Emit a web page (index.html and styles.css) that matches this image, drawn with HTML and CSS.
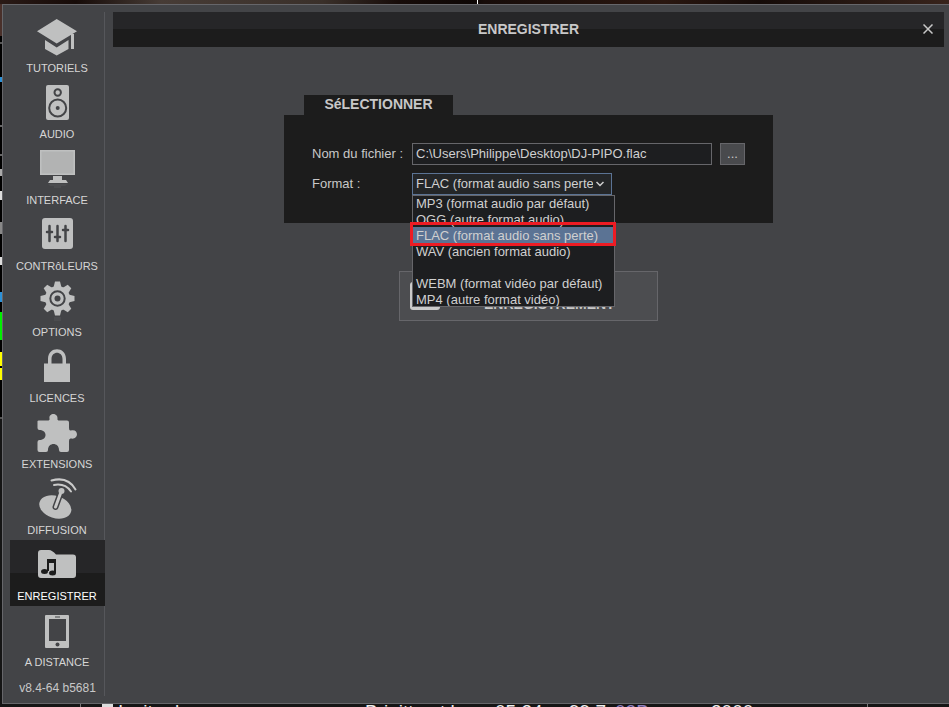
FILE: index.html
```html
<!DOCTYPE html>
<html lang="fr">
<head>
<meta charset="utf-8">
<title>Enregistrer</title>
<link rel="stylesheet" href="styles.css">
</head>
<body>
<div class="desktop">
  <div class="backdrop-top"></div>
  <div class="backdrop-left"></div>
  <main class="window">
    <nav class="sidebar">
      <a class="item" href="#tutoriels">
        <svg viewBox="0 0 47 48"><path d="M3 19.3 22.7 7 43 19.3 22.7 31.5zM11 28l11.700 7.500L34.500 28v9L22.700 43.500 11 37zM37 22h3v15h-3z"/></svg>
        <span>TUTORIELS</span>
      </a>
      <a class="item" href="#audio">
        <svg viewBox="0 0 47 48"><rect x="12" y="7" width="23" height="35" rx="2"/><g class="cut-line"><circle cx="23.700" cy="14.500" r="3.200"/><circle cx="23.700" cy="30" r="8.500"/></g><circle class="cut" cx="23.700" cy="30" r="2"/></svg>
        <span>AUDIO</span>
      </a>
      <a class="item" href="#interface">
        <svg viewBox="0 0 47 48"><path d="M6 6h35v25H6z"/><path d="M19 32h9v4h4l2 3H14l2-3h3z"/><path class="faint" d="M14 40h20l-3 2h-4v2h-7v-2h-4z"/><path class="shade" d="M7.500 7.500h32v22h-32z"/></svg>
        <span>INTERFACE</span>
      </a>
      <a class="item" href="#controleurs">
        <svg viewBox="0 0 47 48"><rect x="8" y="8" width="31" height="31" rx="3"/><path class="slider" d="M15.500 16v15M23.500 16v15M31.500 16v15M13 22h5M21 27h5M29 20h5"/></svg>
        <span>CONTRôLEURS</span>
      </a>
      <a class="item" href="#options">
        <svg viewBox="0 0 47 48"><g transform="translate(23.5 22.5)"><circle r="12.500"/><path id="tooth" d="M-4-11-2.500-17h5L4-11V11L2.500 17h-5L-4 11z"/><use href="#tooth" transform="rotate(45)"/><use href="#tooth" transform="rotate(90)"/><use href="#tooth" transform="rotate(135)"/><circle class="cut-line" r="7.200"/><circle class="cut" r="3"/></g><path class="faint" d="M20 41h7v4h-7z"/></svg>
        <span>OPTIONS</span>
      </a>
      <a class="item" href="#licences">
        <svg viewBox="0 0 47 48"><path fill-rule="evenodd" d="M10 21.500h4V17c0-13 18-13 18 0v4.500h4V40H10zM17.500 21.500h11V17c0-8.500-11-8.500-11 0z"/></svg>
        <span>LICENCES</span>
      </a>
      <a class="item" href="#extensions">
        <svg viewBox="0 0 47 48"><path d="M4.500 12.500h9q2.500 0 2-2c-1-6 8.500-6 8 0q-.5 2 2 2H33q2 0 2 2V20q0 3 2 2.500c8-2 8 9.500 0 8q-2-.5-2 2.500v9q0 2-2 2h-6q-2 0-2-2c0-8-11-8-11 0q0 2-2 2H5.500q-2 0-2-2v-8q0-2 2-2c8 0 8-10 0-10q-2 0-2-2v-7z"/></svg>
        <span>EXTENSIONS</span>
      </a>
      <a class="item" href="#diffusion">
        <svg viewBox="0 0 47 48"><ellipse cx="21.300" cy="33" rx="16.500" ry="11" transform="rotate(18 21.300 33)"/><path class="halo" d="M21.500 33 27 18"/><path class="mast" d="M21.500 33 27 18"/><circle cx="27.500" cy="17" r="3"/><path class="wave" d="M17.500 6.500Q34 2 41.500 15.500M20 11q11-2 17 6.500"/></svg>
        <span>DIFFUSION</span>
      </a>
      <a class="item active" href="#enregistrer" aria-current="page">
        <svg viewBox="0 0 47 48"><path d="M7 10h8q3 0 7 4.500h17q3 0 3 3V35q0 3-3 3H7q-3 0-3-3V13q0-3 3-3z"/><path class="note" d="M13 19h9v14h-2V23h-5v8h-2z"/><ellipse class="note" cx="10.500" cy="31.500" rx="3.500" ry="2.500"/><ellipse class="note" cx="18.500" cy="33" rx="3.500" ry="2.500"/></svg>
        <span>ENREGISTRER</span>
      </a>
      <a class="item" href="#distance">
        <svg viewBox="0 0 47 48"><rect x="11" y="9" width="24" height="33" rx="1"/><path class="cut" d="M15 13h17v22H15zM21 10.500h5v1h-5z"/><circle class="cut" cx="23.500" cy="38.500" r="2"/></svg>
        <span>A DISTANCE</span>
      </a>
      <p class="version">v8.4-64 b5681</p>
    </nav>

    <section class="page">
      <header class="titlebar">
        <h1>ENREGISTRER</h1>
        <button class="close" type="button" aria-label="Fermer"><svg viewBox="0 0 10 10"><path d="M.5.5l9 9M9.500.5l-9 9"/></svg></button>
      </header>

      <form class="content">
        <fieldset class="group">
          <h2 class="tab">SéLECTIONNER</h2>
          <div class="panel">
            <label for="file">Nom du fichier :</label>
            <div class="file">
              <input id="file" type="text" value="C:\Users\Philippe\Desktop\DJ-PIPO.flac">
              <button class="browse" type="button" aria-label="Parcourir">...</button>
            </div>
            <label for="format">Format :</label>
            <div class="dropdown">
              <select id="format">
                <option>FLAC (format audio sans perte)</option>
              </select>
              <svg class="chevron" viewBox="0 0 8 6"><path d="M.5 1 4 4.500 7.500 1"/></svg>
              <ul class="options" role="listbox" aria-label="Format">
                <li role="option">MP3 (format audio par défaut)</li>
                <li role="option">OGG (autre format audio)</li>
                <li role="option" class="selected" aria-selected="true">FLAC (format audio sans perte)</li>
                <li role="option">WAV (ancien format audio)</li>
                <li role="presentation"></li>
                <li role="option">WEBM (format vidéo par défaut)</li>
                <li role="option">MP4 (autre format vidéo)</li>
              </ul>
            </div>
          </div>
        </fieldset>
        <button class="record" type="button"><span class="record-icon"></span><span class="record-text">ENREGISTREMENT</span></button>
      </form>
    </section>
  </main>
  <footer class="tracks">
    <span class="cell first"><i class="box"></i>Inviter la</span>
    <span class="cell artist">Brigitte et les</span>
    <span class="cell time">05:24</span>
    <span class="cell bpm">99.7</span>
    <span class="cell key">02B</span>
    <span class="cell year">2000</span>
    <span class="cell last"></span>
  </footer>
</div>
</body>
</html>
```
FILE: styles.css
```css
* { box-sizing: border-box; }

body {
  margin: 0;
  background: #151515;
  color: #c8c8c8;
  font: 13px/16px "Liberation Sans", Arial, sans-serif;
}

.desktop {
  display: grid;
  grid-template: 4px 1fr 3px / 2px 1fr;
  height: 100vh;
  overflow: hidden;
}

.backdrop-top {
  grid-column: 1 / -1;
  background: linear-gradient(90deg, #2a1a16, #160b08 8%, #473c36 17%, #3a302a 34%, #170c09 42%, #0e0705 50%, #170c09 51%, #2a1710 70%, #150b08 80%, #38241c);
  position: relative;
}

.backdrop-top::after {
  content: "";
  position: absolute;
  left: 477px;
  width: 1px;
  height: 4px;
  background: #fff;
}

.backdrop-left {
  background: linear-gradient(#49302a 32px, #000 32px 38px, #555 38px 40px, #000 40px 73px, #2c91d8 73px 78px, #000 78px 121px, #666 121px 123px, #000 123px 150px, #666 150px 152px, #000 152px 165px, #aaa 165px 172px, #000 172px 187px, #ddd 187px 196px, #000 196px 218px, #888 218px 230px, #000 230px 253px, #ddd 253px 261px, #000 261px 288px, #2c91d8 288px 298px, #000 298px 308px, #00f000 308px 336px, #000 336px 348px, #ff0 348px 362px, #000 362px 364px, #ff0 364px 376px, #000 376px 413px, #555 413px 415px, #151515 415px);
}

.window {
  display: flex;
  gap: 8px;
  padding: 7px 5px 7px 7px;
  border: 1px solid #66666a;
  border-right: 0;
  background: #434447;
  min-height: 0;
}

.sidebar {
  flex: 0 0 95px;
  box-shadow: inset -1px 0 #56575b;
  text-align: center;
}

.item {
  display: flex;
  flex-direction: column;
  align-items: center;
  height: 66px;
  color: #d6d6d6;
  font-size: 11px;
  text-decoration: none;
}

.item svg {
  width: 47px;
  height: 48px;
  fill: #bfc0c0;
}

.item span { padding-right: 1px; }

.item.active {
  background: linear-gradient(#262628 50%, #1c1c1c 50%);
  color: #fff;
}

.item .cut { fill: #434447; }
.item .cut-line { fill: none; stroke: #434447; stroke-width: 2; }
.item .slider { fill: none; stroke: #434447; stroke-width: 2.500; stroke-linecap: round; }
.item .note { fill: #1c1c1c; }
.item .faint { fill: #4b4c4f; }
.item .shade { fill: #b2b3b3; }
.item .halo { fill: none; stroke: #434447; stroke-width: 6; stroke-linecap: round; }
.item .mast { fill: none; stroke: #cacaca; stroke-width: 3; stroke-linecap: round; }
.item .wave { fill: none; stroke: #cacaca; stroke-width: 2; stroke-linecap: round; }

.version {
  margin: 8px 0 0;
  font-size: 12px;
}

.page {
  flex: 1;
  min-width: 0;
}

.titlebar {
  display: grid;
  grid-template-columns: 32px 1fr 32px;
  height: 35px;
  background: linear-gradient(#262628 17px, #1c1c1c 17px);
}

.titlebar h1 {
  grid-column: 2;
  margin: 0;
  font-size: 14px;
  line-height: 34px;
  text-align: center;
}

button {
  padding: 0;
  border: 0;
  background: none;
  color: inherit;
  font: inherit;
}

.close {
  display: flex;
  align-items: center;
  justify-content: center;
  height: 34px;
}

.close svg {
  width: 10px;
  height: 10px;
  stroke: #c8c8c8;
  stroke-width: 1.500;
}

.content {
  display: flex;
  flex-direction: column;
  align-items: center;
  gap: 48px;
  padding-top: 48px;
}

.group {
  margin: 0;
  padding: 0;
  border: 0;
}

.tab {
  width: 149px;
  height: 20px;
  margin: 0 0 0 20px;
  background: #1c1c1c;
  font-size: 14px;
  line-height: 18px;
  text-align: center;
}

.panel {
  display: grid;
  grid-template-columns: 100px auto;
  row-gap: 8px;
  align-items: center;
  padding: 28px;
  background: #1c1c1c;
}

.file {
  display: flex;
  gap: 8px;
}

input,
select {
  height: 22px;
  padding: 0 3px;
  border: 1px solid #66666a;
  border-radius: 0;
  background: #1d1e20;
  color: #d0d0d0;
  font: inherit;
}

input {
  width: 300px;
  padding-bottom: 2px;
}

.browse {
  width: 25px;
  height: 22px;
  border: 1px solid #66666a;
  background: #494a4d;
}

.dropdown {
  position: relative;
  width: 200px;
}

select {
  display: block;
  width: 100%;
  padding-right: 18px;
  border-color: #5b7394;
  background: #242628;
  appearance: none;
  text-overflow: clip;
}

.chevron {
  position: absolute;
  top: 8px;
  right: 8px;
  width: 8px;
  height: 6px;
  fill: none;
  stroke: #d0d0d0;
  stroke-width: 1.500;
}

.options {
  position: absolute;
  z-index: 1;
  top: 100%;
  left: 0;
  width: 203px;
  margin: 0;
  padding: 0;
  outline: 1px solid #66666a;
  outline-offset: -1px;
  background: #1d1e20;
  color: #d0d0d0;
  line-height: 18px;
  list-style: none;
}

.options li {
  height: 16px;
  padding-left: 4px;
  white-space: nowrap;
}

.options .selected {
  position: relative;
  background: #5b7394;
}

.options .selected::after {
  content: "";
  position: absolute;
  inset: -5px -1px -3px -2px;
  border: 3px solid #ed1c24;
}

.record {
  display: flex;
  align-items: flex-end;
  gap: 44px;
  width: 259px;
  height: 50px;
  padding: 0 10px 10px;
  border: 1px solid #66666a;
  background: #4c4d50;
  font-size: 14px;
  font-weight: bold;
  line-height: 12px;
}

.record-icon {
  width: 30px;
  height: 28px;
  border-radius: 3px;
  background: #cacaca;
}

.tracks {
  grid-column: 1 / -1;
  display: grid;
  grid-template-columns: 80px 285px 130px 74px 46px 96px 156px 1fr;
  overflow: hidden;
  color: #eee;
  font-size: 19px;
  line-height: 16px;
}

.cell { white-space: nowrap; }

.first {
  display: flex;
  grid-column: 2;
  gap: 5px;
  padding-left: 21px;
  border-left: 1px solid #777;
}

.box {
  width: 11px;
  background: #ddd;
}

.key { color: #9080c0; }
.last { border-left: 1px solid #777; }
```
